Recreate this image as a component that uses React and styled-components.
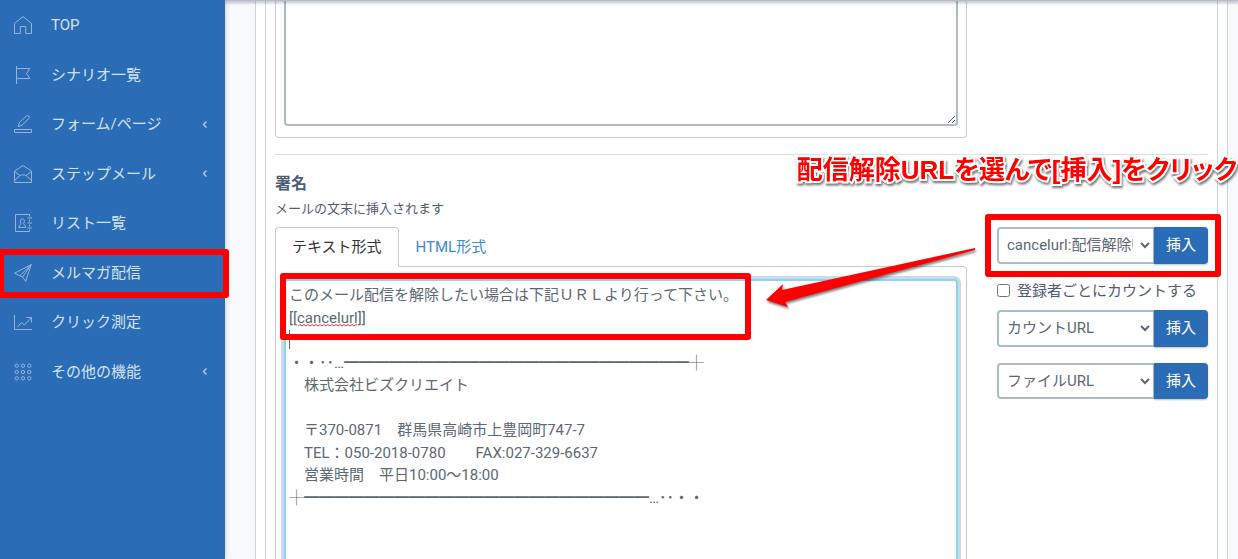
import React from "react";
import styled, { createGlobalStyle } from "styled-components";

const GlobalStyle = createGlobalStyle`
  * {
    box-sizing: border-box;
  }
  body {
    margin: 0;
    overflow: hidden;
    background: #f8f9fc;
    color: #4f5d73;
    font-family: Roboto, "Noto Sans CJK JP", sans-serif;
    font-size: 15px;
    font-weight: 400;
    line-height: 1.5;
  }
  button, select, textarea, input {
    font: inherit;
  }
`;

const Page = styled.div`
  display: flex;
  height: 100vh;
  overflow: hidden;
`;

const Sidebar = styled.nav`
  position: relative;
  z-index: 2;
  flex: 0 0 225px;
  padding-top: 1px;
  background: #2a6cb6;
  box-shadow: 0 0 5px rgba(60, 75, 100, 0.3);
`;

const MenuList = styled.ul`
  margin: 0;
  padding: 0;
  list-style: none;
`;

const MenuItem = styled.li`
  position: relative;
  border-bottom: 1px solid transparent;
`;

const MenuLink = styled.a`
  display: flex;
  align-items: center;
  padding: 13px 18px 13px 14px;
  color: #d4e2f0;
  text-decoration: none;
`;

const MenuIcon = styled.svg`
  flex: none;
  width: 18px;
  height: 18px;
  margin-right: 19px;
  fill: none;
  stroke: #94b5da;
  overflow: visible;
`;

const Chevron = styled.svg`
  width: 4px;
  height: 7px;
  margin-left: auto;
  fill: none;
  stroke: #b4cbe5;
  stroke-width: 1.4;
`;

const Main = styled.main`
  position: relative;
  flex: 1;
  min-width: 0;
  padding: 0 10px 0 30px;
`;

const HeaderShadow = styled.div`
  position: absolute;
  z-index: 1;
  top: 0;
  left: 0;
  right: 0;
  height: 1px;
  background: #b7bcc8;
  box-shadow: 0 1px 3px 1px rgba(60, 75, 100, 0.35);
`;

const Card = styled.div`
  height: 100%;
  padding: 0 9px;
  background: #fff;
  border: solid #c9d6d9;
  border-width: 0 1px;
`;

const CardBody = styled.div`
  height: 100%;
  padding: 0 9px;
  border: solid #c9d6d9;
  border-width: 0 1px;
`;

const Columns = styled.div`
  position: relative;
  display: grid;
  grid-template-columns: minmax(0, 1fr) 211px;
  column-gap: 30px;
  align-items: start;
`;

const TabPanel = styled.div`
  padding: 12px 8px 11px;
  border: 1px solid #c4ced2;
  border-radius: 0 4px 4px 4px;
`;

const BodyPanel = styled(TabPanel)`
  padding-top: 0;
  border-top: 0;
`;

const TextBox = styled.textarea`
  display: block;
  width: 100%;
  height: ${(props) => props.$height};
  padding: 3px;
  color: #5c6873;
  background: #fff;
  border: 2px solid #a9bec7;
  border-radius: 4px;
  outline: none;
  resize: vertical;
`;

const BodyBox = styled(TextBox)`
  border-top: 0;
  border-radius: 0 0 4px 4px;
`;

const SignatureBox = styled(TextBox)`
  border-color: #8ad4ee;
  box-shadow: 0 0 0 3px #c9daee;
`;

const Editor = styled.div`
  position: relative;
`;

const Caret = styled.span`
  position: absolute;
  top: 51px;
  left: 5px;
  width: 1px;
  height: 19px;
  background: #5c6873;
`;

const Squiggle = styled.svg`
  position: absolute;
  top: 45px;
  left: 14px;
  width: 59px;
  height: 3px;
  fill: none;
  stroke: #f03030;
`;

const Divider = styled.hr`
  margin: 16px 0 17px;
  border: 0;
  border-top: 1px solid #d8e2e4;
`;

const SectionHead = styled.div`
  position: relative;
  padding-bottom: 9px;
`;

const Title = styled.h2`
  margin: 0 0 3px;
  font-size: 16px;
  font-weight: 700;
  line-height: 24px;
`;

const Hint = styled.p`
  margin: 0;
  font-size: 13px;
  line-height: 19px;
`;

const TabBar = styled.div`
  display: flex;
  margin-bottom: -1px;
`;

const Tab = styled.button`
  position: relative;
  height: 40px;
  padding: 0 16px;
  color: ${(props) => (props.$active ? "#2f353a" : "#3a8bd0")};
  background: ${(props) => (props.$active ? "#fff" : "transparent")};
  border: 1px solid ${(props) => (props.$active ? "#c4ced2" : "transparent")};
  border-bottom-color: ${(props) => (props.$active ? "#fff" : "transparent")};
  border-radius: 4px 4px 0 0;
`;

const InsertGroup = styled.div`
  position: relative;
  display: flex;
  margin-bottom: 16px;
`;

const InsertSelect = styled.select`
  flex: 1;
  min-width: 0;
  padding: 0 4px;
  color: #5c6873;
  background: #fff;
  border: 2px solid #a9bec7;
  border-right-width: 1px;
  border-radius: 4px 0 0 4px;
`;

const InsertButton = styled.button`
  padding: 7px 12px;
  color: #fff;
  background: #2a6cb6;
  border: 0;
  border-radius: 0 4px 4px 0;
  box-shadow: 0 1px 2px rgba(0, 0, 0, 0.25);
`;

const CheckLabel = styled.label`
  display: flex;
  align-items: center;
  gap: 7px;
  margin-bottom: 8px;
`;

const Checkbox = styled.input`
  width: 13px;
  height: 13px;
  margin: 0;
`;

const Highlight = styled.div`
  position: absolute;
  inset: ${(props) => props.$inset};
  border: 6px solid #f00;
  border-radius: 3px;
  pointer-events: none;
`;

const TextHighlight = styled(Highlight)`
  width: 471px;
  height: 67px;
`;

const Callout = styled.div`
  position: absolute;
  top: -20px;
  right: -29px;
  color: #f00;
  font-family: "Liberation Sans", "Noto Sans CJK JP", sans-serif;
  font-size: 26px;
  font-weight: 700;
  font-feature-settings: "palt";
  line-height: 36px;
  white-space: nowrap;
  paint-order: stroke fill;
  -webkit-text-stroke: 4px #fff;
  filter: drop-shadow(1px 2px 1px rgba(0, 0, 0, 0.55));
`;

const Arrow = styled.svg`
  position: absolute;
  top: 13px;
  right: 228px;
  width: 220px;
  height: 74px;
  fill: #f00;
  filter: drop-shadow(1px 2px 1px rgba(0, 0, 0, 0.5));
  pointer-events: none;
`;

const icons = {
  home: <path d="M.5 7.3 9 .6l8.5 6.7v10.2h-5.8v-7H6.3v7H.5z" />,
  flag: <path d="M2.5 0v18M2.5 2.5h13.3l-3.2 5 3.2 5H2.5" />,
  pencil: (
    <>
      <path d="M.5 14.5h17v3H.5z" />
      <path d="M4.3 11.5l.9-3.7L12.4.9c1.5-1 3.6.7 2.8 2.3L8 10.3z" />
    </>
  ),
  mail: (
    <path d="M.5 6 9 .6 17.5 6v11.5H.5zM.5 6.5 6 10.6M17.5 6.5 12 10.6M.5 15.5l5.3-4.8c2-1.2 4.4-1.2 6.4 0l5.3 4.8" />
  ),
  book: (
    <>
      <path d="M15.5 2.5v-2h-14v17h14v-2M15.5 5.5v2M15.5 10.5v2M13.5 4h4.5M13.5 9h4.5M13.5 14h4.5" />
      <path d="M7 9.8C5.7 7.5 6.2 4.7 8.3 4.7s2.6 2.8 1.3 5.1c.3 1.2 2.1 1 2.1 3.7H4.8c0-2.7 1.9-2.5 2.2-3.7z" />
    </>
  ),
  plane: <path d="M17.2.6.6 9.2l5.3 2.6L17.2.6 11.7 17.4 8.6 13 5.9 11.8M17.2.6 8.6 13" />,
  chart: <path d="M.5 2v14.5H18M3.5 14 7.5 9.5l3 2.5L17 5M12.5 4.5h5v5" />,
  grid: [2.7, 9, 15.3].map((y) =>
    [2.7, 9, 15.3].map((x) => <circle key={`${x}-${y}`} cx={x} cy={y} r="1.7" />)
  ),
};

const menu = [
  { icon: "home", label: "TOP" },
  { icon: "flag", label: "シナリオ一覧" },
  { icon: "pencil", label: "フォーム/ページ", sub: true },
  { icon: "mail", label: "ステップメール", sub: true },
  { icon: "book", label: "リスト一覧" },
  { icon: "plane", label: "メルマガ配信", marked: true },
  { icon: "chart", label: "クリック測定" },
  { icon: "grid", label: "その他の機能", sub: true },
];

const line = "━".repeat(23);

const signature = [
  "このメール配信を解除したい場合は下記ＵＲＬより行って下さい。",
  "[[cancelurl]]",
  "",
  `・・･･…${line}┼`,
  "　株式会社ビズクリエイト",
  "",
  "　〒370-0871　群馬県高崎市上豊岡町747-7",
  "　TEL：050-2018-0780　　FAX:027-329-6637",
  "　営業時間　平日10:00〜18:00",
  `┼${line}…･･・・`,
].join("\n");

const Insert = ({ name, option, marked }) => (
  <InsertGroup>
    <InsertSelect aria-label={name}>
      <option>{option}</option>
    </InsertSelect>
    <InsertButton type="button">挿入</InsertButton>
    {marked && <Highlight $inset="-13px -13px -13px -12px" />}
  </InsertGroup>
);

const App = () => {
  return (
    <Page>
      <GlobalStyle />
      <Sidebar>
        <MenuList>
          {menu.map((item) => (
            <MenuItem key={item.label}>
              <MenuLink href="#">
                <MenuIcon viewBox="0 0 18 18">{icons[item.icon]}</MenuIcon>
                {item.label}
                {item.sub && (
                  <Chevron viewBox="0 0 4 7">
                    <path d="M3.5.5l-3 3 3 3" />
                  </Chevron>
                )}
              </MenuLink>
              {item.marked && <Highlight $inset="0 -4px -1px -2px" />}
            </MenuItem>
          ))}
        </MenuList>
      </Sidebar>
      <Main>
        <HeaderShadow />
        <Card>
          <CardBody>
            <Columns>
              <BodyPanel>
                <BodyBox $height="126px" aria-label="本文" />
              </BodyPanel>
            </Columns>
            <Divider />
            <SectionHead>
              <Title>署名</Title>
              <Hint>メールの文末に挿入されます</Hint>
              <Callout>配信解除URLを選んで[挿入]をクリック</Callout>
            </SectionHead>
            <Columns>
              <div>
                <TabBar>
                  <Tab type="button" $active>
                    テキスト形式
                  </Tab>
                  <Tab type="button">HTML形式</Tab>
                </TabBar>
                <TabPanel>
                  <Editor>
                    <SignatureBox
                      $height="360px"
                      aria-label="署名"
                      spellCheck={false}
                      defaultValue={signature}
                    />
                    <Squiggle viewBox="0 0 59 3">
                      <path d={`M0 2${"l2-1.5 2 1.5".repeat(15)}`} />
                    </Squiggle>
                    <Caret />
                    <TextHighlight $inset="-6px auto auto -4px" />
                  </Editor>
                </TabPanel>
              </div>
              <div>
                <Insert name="置換文字" option="cancelurl:配信解除URL" marked />
                <CheckLabel>
                  <Checkbox type="checkbox" />
                  登録者ごとにカウントする
                </CheckLabel>
                <Insert name="カウント" option="カウントURL" />
                <Insert name="ファイル" option="ファイルURL" />
              </div>
              <Arrow viewBox="0 0 220 74">
                <path d="M215 8v2L25 62l3 5L6 60l17-16-1 6z" />
              </Arrow>
            </Columns>
          </CardBody>
        </Card>
      </Main>
    </Page>
  );
};

export default App;
